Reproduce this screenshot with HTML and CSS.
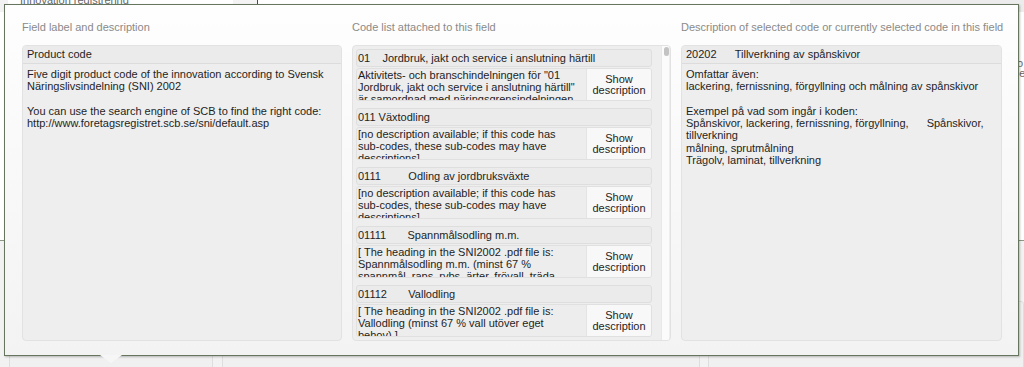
FILE: index.html
```html
<!DOCTYPE html>
<html lang="sv">
<head>
    <meta charset="UTF-8">
    <meta name="viewport" content="width=device-width, initial-scale=1.0">
    <title>Code list</title>
    <link rel="stylesheet" href="styles.css">
</head>
<body>

    <div class="page">
        <div class="page-head">
            <div class="crumbs">Innovation registrering</div>
            <div class="head-gap"></div>
            <div class="head-main"></div>
            <div class="head-side"></div>
        </div>
        <div class="page-main">
            <div class="side-note">Do<br>Se</div>
        </div>
        <div class="page-foot">
            <div class="foot-box first"></div>
            <div class="foot-box second"></div>
            <div class="foot-box third"></div>
        </div>
    </div>

    <div class="popup">
        <div class="col">
            <div class="col-label">Field label and description</div>
            <div class="panel">
                <div class="panel-title">Product code</div>
                <div class="panel-text">
                    Five digit product code of the innovation according to Svensk Näringslivsindelning (SNI) 2002<br><br>
                    You can use the search engine of SCB to find the right code:<br>
                    http://www.foretagsregistret.scb.se/sni/default.asp
                </div>
            </div>
        </div>

        <div class="col">
            <div class="col-label">Code list attached to this field</div>
            <div class="panel code-list">
                <div class="codes">
                    <div class="code-item">
                        <div class="code-title">01    Jordbruk, jakt och service i anslutning härtill</div>
                        <div class="code-row">
                            <div class="code-desc">Aktivitets- och branschindelningen för "01<br>Jordbruk, jakt och service i anslutning härtill"<br>är samordnad med näringsgrensindelningen</div>
                            <div class="code-btn">Show<br>description</div>
                        </div>
                    </div>
                    <div class="code-item">
                        <div class="code-title">011 Växtodling</div>
                        <div class="code-row">
                            <div class="code-desc">[no description available; if this code has<br>sub-codes, these sub-codes may have<br>descriptions]</div>
                            <div class="code-btn">Show<br>description</div>
                        </div>
                    </div>
                    <div class="code-item">
                        <div class="code-title">0111         Odling av jordbruksväxte</div>
                        <div class="code-row">
                            <div class="code-desc">[no description available; if this code has<br>sub-codes, these sub-codes may have<br>descriptions]</div>
                            <div class="code-btn">Show<br>description</div>
                        </div>
                    </div>
                    <div class="code-item">
                        <div class="code-title">01111       Spannmålsodling m.m.</div>
                        <div class="code-row">
                            <div class="code-desc">[ The heading in the SNI2002 .pdf file is:<br>Spannmålsodling m.m. (minst 67 %<br>spannmål, raps, rybs, ärter, frövall, träda</div>
                            <div class="code-btn">Show<br>description</div>
                        </div>
                    </div>
                    <div class="code-item">
                        <div class="code-title">01112       Vallodling</div>
                        <div class="code-row">
                            <div class="code-desc">[ The heading in the SNI2002 .pdf file is:<br>Vallodling (minst 67 % vall utöver eget<br>behov) ]</div>
                            <div class="code-btn">Show<br>description</div>
                        </div>
                    </div>
                </div>
                <div class="scrollbar"><div class="thumb"></div></div>
            </div>
        </div>

        <div class="col">
            <div class="col-label">Description of selected code or currently selected code in this field</div>
            <div class="panel">
                <div class="panel-title">20202      Tillverkning av spånskivor</div>
                <div class="panel-text">
                    Omfattar även:<br>
                    lackering, fernissning, förgyllning och målning av spånskivor<br><br>
                    Exempel på vad som ingår i koden:<br>
                    Spånskivor, lackering, fernissning, förgyllning, <span class="tab"></span>Spånskivor, tillverkning<br>
                    målning, sprutmålning<br>
                    Trägolv, laminat, tillverkning
                </div>
            </div>
        </div>
    </div>

</body>
</html>
```

FILE: styles.css
```css
* {
    margin: 0;
    padding: 0;
    box-sizing: border-box;
}

body {
    width: 1024px;
    height: 367px;
    overflow: hidden;
    position: relative;
    font-family: "Liberation Sans", Arial, sans-serif;
    font-size: 11px;
    color: #1e1e1e;
    background: #f2f2f2;
}

/* page behind the popup */
.page {
    display: flex;
    flex-direction: column;
    height: 367px;
}

.page-head {
    display: flex;
    height: 12px;
}

.crumbs {
    width: 225px;
    margin-left: 8px;
    padding-left: 12px;
    background: #fff;
    color: #666;
    line-height: 0;
    overflow: hidden;
}

.head-gap {
    width: 25px;
    background: #f4f4f4;
    border-right: 1px solid #4a4a4a;
}

.head-main {
    flex: 1;
    background: #fff;
}

.head-side {
    width: 234px;
    background: #ececec;
}

.page-main {
    height: 229px;
    display: flex;
    justify-content: flex-end;
    padding-top: 46px;
    background: #fff;
    border-bottom: 1px solid #8c9886;
}

.side-note {
    width: 12px;
    overflow: hidden;
    color: #666;
    line-height: 10px;
    text-indent: -3px;
}

.page-foot {
    flex: 1;
    display: flex;
    align-items: flex-end;
    padding: 0 0 0 9px;
}

.foot-box {
    height: 70px;
    margin-bottom: -4px;
    background: #f0f0f0;
    border: 1px solid #dedede;
    border-radius: 3px;
}

.foot-box.first { width: 204px; margin-right: 9px; }
.foot-box.second { width: 478px; margin-right: 8px; }
.foot-box.third { flex: 1; }

/* popup */
.popup {
    position: absolute;
    left: 4px;
    top: 4px;
    width: 1015px;
    height: 352px;
    padding: 15px 15px 13px 17px;
    display: grid;
    grid-template-columns: 320px 319px 321px;
    column-gap: 10px;
    background: linear-gradient(#fefefe, #f3f3f3);
    border: 1px solid #66765e;
    box-shadow: 1px 1px 2px rgba(0, 0, 0, 0.25);
}

.popup::after {
    content: "";
    position: absolute;
    left: 95px;
    bottom: -8px;
    border-left: 11px solid transparent;
    border-right: 11px solid transparent;
    border-top: 8px solid #f6f6f6;
}

.col-label {
    height: 14px;
    line-height: 14px;
    margin-bottom: 11px;
    color: #8a8a8a;
    white-space: nowrap;
}

.panel {
    height: 296px;
    background: #eeeeee;
    border: 1px solid #e2e2e2;
    border-radius: 4px;
    overflow: hidden;
}

.panel-title {
    height: 18px;
    line-height: 17px;
    padding: 0 5px 0 4px;
    background: #ebebeb;
    border-bottom: 1px solid #dcdcdc;
    white-space: pre;
}

.panel-text {
    padding: 4px 5px 0 4px;
    line-height: 12.25px;
}

.tab {
    display: inline-block;
    width: 15px;
}

/* code list */
.code-list {
    display: flex;
}

.codes {
    width: 299px;
    padding: 3px 0 0 3px;
    margin-right: 9px;
    overflow: hidden;
}

.code-item {
    margin-bottom: 7px;
}

.code-title {
    height: 18px;
    line-height: 16px;
    padding-left: 1px;
    margin-bottom: 1px;
    background: #ebebeb;
    border: 1px solid #dedede;
    border-radius: 3px;
    white-space: pre;
}

.code-row {
    display: flex;
    height: 33px;
    background: #ededed;
    border: 1px solid #e0e0e0;
    border-radius: 3px;
    overflow: hidden;
}

.code-desc {
    width: 229px;
    padding-left: 1px;
    line-height: 12px;
    white-space: nowrap;
    overflow: hidden;
}

.code-btn {
    flex: 1;
    display: flex;
    align-items: center;
    justify-content: center;
    text-align: center;
    line-height: 11px;
    background: #f8f8f8;
    border-left: 1px solid #e4e4e4;
}

.scrollbar {
    width: 8px;
    background: #fbfbfb;
    border-left: 1px solid #e8e8e8;
}

.thumb {
    width: 5px;
    height: 9px;
    margin: 1px 0 0 2px;
    background: #c3c3c3;
    border-radius: 3px;
}
```
